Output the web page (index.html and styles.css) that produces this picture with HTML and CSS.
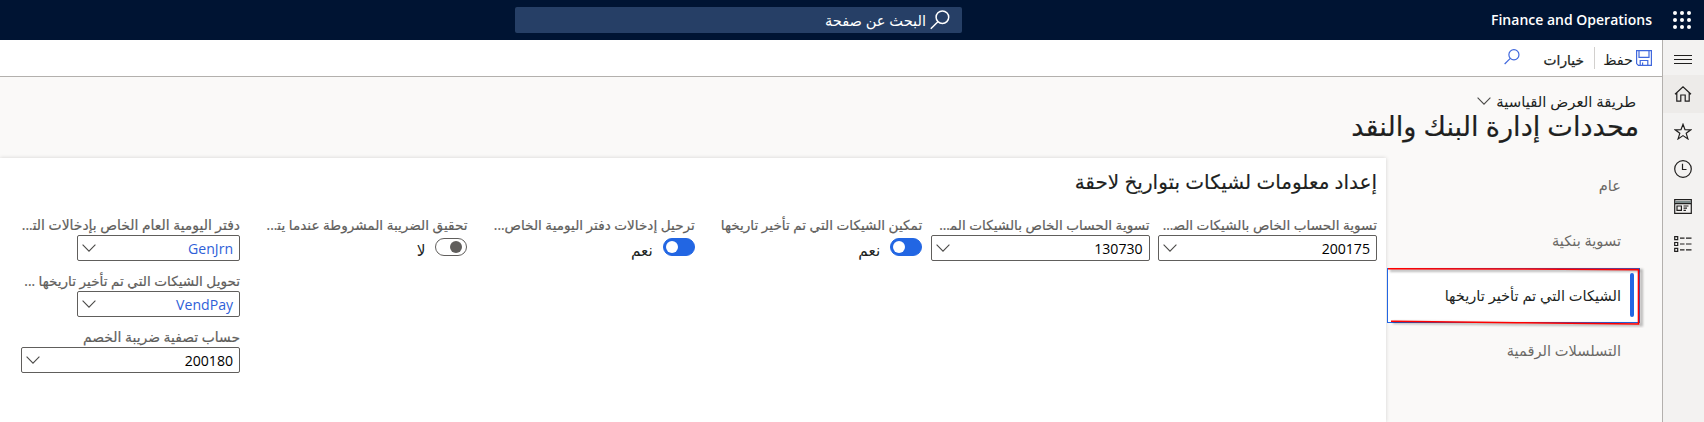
FILE: index.html
```html
<!DOCTYPE html>
<html lang="ar" dir="rtl">
<head>
<meta charset="utf-8">
<title>محددات إدارة البنك والنقد</title>
<link rel="stylesheet" href="styles.css">
</head>
<body>
<svg class="defs" aria-hidden="true">
  <symbol id="chevron" viewBox="0 0 14 8"><path d="M.6.7 7 7.1 13.4.7"/></symbol>
  <symbol id="search" viewBox="0 0 20 20"><circle cx="12.4" cy="7.2" r="6.3"/><path d="M7.9 11.7.8 18.8"/></symbol>
</svg>
<header class="topbar">
  <svg class="waffle" viewBox="0 0 18 18"><circle cx="2" cy="2" r="2"/><circle cx="9" cy="2" r="2"/><circle cx="16" cy="2" r="2"/><circle cx="2" cy="9" r="2"/><circle cx="9" cy="9" r="2"/><circle cx="16" cy="9" r="2"/><circle cx="2" cy="16" r="2"/><circle cx="9" cy="16" r="2"/><circle cx="16" cy="16" r="2"/></svg>
  <span class="brand" dir="ltr">Finance and Operations</span>
  <div class="searchbox"><svg class="search-icon"><use href="#search"/></svg><span>البحث عن صفحة</span></div>
</header>
<div class="shell">
  <nav class="rail">
    <a class="rail-item menu"><svg width="18" height="11" viewBox="0 0 18 11"><path d="M0 1.5h18M0 5.5h18M0 9.5h18"/></svg></a>
    <a class="rail-item home"><svg width="18" height="16" viewBox="0 0 18 16"><path d="M1 8.2 9 .8l8 7.4M2.8 6.8v8.400h4V9h4.400v6.200h4V6.800"/></svg></a>
    <a class="rail-item"><svg width="18" height="17" viewBox="0 0 18 17"><path d="m9 1.3 2 5.400 5.800.1-4.600 3.500 1.700 5.600L9 12.600l-4.900 3.300 1.700-5.600L1.200 6.800 7 6.700z"/></svg></a>
    <a class="rail-item"><svg width="18" height="18" viewBox="0 0 18 18"><circle cx="9" cy="9" r="8.3"/><path d="M8.5 3.800v5.700h4"/></svg></a>
    <a class="rail-item"><svg width="18" height="15" viewBox="0 0 18 15"><path d="M.7.7h16.600v13.600H.7zM.7 4.600h16.600M3 7h4.400v4.400H3zM9.500 7h5M9.500 9.200h3.500M9.500 11.400h2.400"/><path class="bar" d="M1 3h16"/></svg></a>
    <a class="rail-item"><svg width="18" height="16" viewBox="0 0 18 16"><path d="M.7.7h3v3h-3zM.7 6.500h3v3h-3zM.7 12.300h3v3h-3zM6 2.200h4.500M12 2.200h5.500M6 8h4.500M12 8h5.500M6 13.800h4.500M12 13.800h5.500"/></svg></a>
  </nav>
  <main class="page">
    <div class="toolbar">
      <svg class="save-icon" viewBox="0 0 16 16"><path d="M.6.6h14.800v14.800H2.400L.6 13.600zM3 .6v6.800h10V.6M4.200 15.400v-4.900h7.600v4.900M6.600 12.600v2.800"/></svg>
      <span class="save">حفظ</span>
      <i class="divider"></i>
      <span class="options">خيارات</span>
      <svg class="find" viewBox="0 0 20 20"><use href="#search"/></svg>
    </div>
    <div class="heading">
      <div class="view"><span>طريقة العرض القياسية</span><svg class="chev"><use href="#chevron"/></svg></div>
      <h1>محددات إدارة البنك والنقد</h1>
    </div>
    <div class="content">
      <ul class="tabs">
        <li>عام</li>
        <li>تسوية بنكية</li>
        <li class="active">الشيكات التي تم تأخير تاريخها<svg class="marker" viewBox="0 0 260 64"><path class="shade" d="M3 6.500H254.500V61L130 60 6 58.500"/><path class="red" d="M1 4.700 126 5 251.500 5.600V60L130 58.700 4 57.300"/></svg></li>
        <li>التسلسلات الرقمية</li>
      </ul>
      <section class="card">
        <h2>إعداد معلومات لشيكات بتواريخ لاحقة</h2>
        <div class="fields">
          <div class="col">
            <label>تسوية الحساب الخاص بالشيكات الص&zwj;...</label>
            <div class="combo"><span>200175</span><svg class="chev"><use href="#chevron"/></svg></div>
          </div>
          <div class="col">
            <label>تسوية الحساب الخاص بالشيكات الم&zwj;...</label>
            <div class="combo"><span>130730</span><svg class="chev"><use href="#chevron"/></svg></div>
          </div>
          <div class="col">
            <label>تمكين الشيكات التي تم تأخير تاريخها</label>
            <div class="toggle-row"><i class="toggle on"></i><span>نعم</span></div>
          </div>
          <div class="col">
            <label>ترحيل إدخالات دفتر اليومية الخاص...</label>
            <div class="toggle-row"><i class="toggle on"></i><span>نعم</span></div>
          </div>
          <div class="col">
            <label>تحقيق الضريبة المشروطة عندما يت&zwj;...</label>
            <div class="toggle-row"><i class="toggle"></i><span>لا</span></div>
          </div>
          <div class="col">
            <label class="wide">دفتر اليومية العام الخاص بإدخالات الت&zwj;...</label>
            <div class="combo short"><span class="link">GenJrn</span><svg class="chev"><use href="#chevron"/></svg></div>
            <label>تحويل الشيكات التي تم تأخير تاريخها ...</label>
            <div class="combo short"><span class="link">VendPay</span><svg class="chev"><use href="#chevron"/></svg></div>
            <label class="wide">حساب تصفية ضريبة الخصم</label>
            <div class="combo"><span>200180</span><svg class="chev"><use href="#chevron"/></svg></div>
          </div>
        </div>
      </section>
    </div>
  </main>
</div>
</body>
</html>
```

FILE: styles.css
```css
*{box-sizing:border-box}
body{margin:0;height:422px;overflow:hidden;font-family:"Open Sans","DejaVu Sans",sans-serif;font-size:14.6px;color:#201f1e;background:#faf9f8;white-space:nowrap}
svg{display:block;fill:none;stroke:currentColor;flex:none}
.defs{position:absolute;width:0;height:0}
.topbar{height:40px;background:#001433;color:#fff;display:flex;align-items:center;padding-right:12px}
.waffle{width:18px;height:18px;fill:#fff;stroke:none;margin-right:1px}
.brand{font-weight:600;font-size:14px;width:162px;margin-right:20px;line-height:20px;padding-bottom:1px}
.searchbox{width:447px;height:26px;margin-right:529px;background:#263f66;border-radius:2px;display:flex;align-items:center;padding-right:12px;gap:4px;line-height:24px}
.search-icon{width:20px;height:20px;stroke-width:1.5}
.shell{display:flex;height:382px}
.rail{width:42px;background:#f3f2f1;border-left:1px solid #b3b0ad;color:#201f1e}
.rail-item{height:37.5px;display:flex;align-items:center;justify-content:center;stroke-width:1.2;padding-right:1px}
.rail-item.menu{height:35px;padding-top:3px;stroke-width:1}
.rail-item.home{background:#edebe9}
.rail-item .bar{stroke:#7c8a8a;stroke-width:2}
.page{flex:1;min-width:0}
.toolbar{height:37px;background:#fff;border-bottom:1px solid #b3b0ad;display:flex;align-items:center;padding-right:10px}
.save-icon{width:16px;height:16px;color:#4068dd;stroke-width:1.2}
.save{font-size:14.4px;width:29px;margin-right:3px;margin-top:3px}
.divider{width:1px;height:22px;background:#d2d0ce;margin-right:9px}
.options{font-size:13.8px;width:41px;margin-right:10px;margin-top:3px;-webkit-text-stroke:.25px}
.find{width:16px;height:16px;margin-right:23px;color:#4068dd;stroke-width:1.5;margin-bottom:3px}
.heading{height:81px;padding:13px 23px 0}
.view{display:flex;align-items:center;gap:5px;font-size:14.9px;line-height:22px;padding-right:3px}
.chev{width:14px;height:8px;color:#4b4a48;stroke-width:1.1}
h1{margin:0;font-size:27.2px;line-height:28px;font-weight:400;-webkit-text-stroke:.2px}
.content{display:flex;height:264px}
.tabs{list-style:none;margin:0;padding:0 22px 0 0;width:276px}
.tabs li{position:relative;height:55px;line-height:54px;padding-right:19px;color:#6b6966;width:253px}
.tabs li.active{color:#201f1e;background:#fff;border:1px solid #2266e3;padding-right:18px;line-height:52px}
.tabs li.active::before{content:"";position:absolute;right:5px;top:4px;width:4px;height:44px;border-radius:2px;background:#2266e3}
.marker{position:absolute;left:-1px;top:-5px;width:260px;height:64px}
.red{stroke:#ff0000;stroke-width:1.6}
.shade{stroke:#000;stroke-opacity:.25;stroke-width:3;filter:blur(1.2px)}
.card{flex:1;background:#fff;box-shadow:0 0 4px rgba(0,0,0,.16);padding:7px 9px}
h2{margin:0;font-size:20px;font-weight:400;line-height:34px;-webkit-text-stroke:.15px}
.fields{display:grid;grid-template-columns:repeat(6,219px);column-gap:8.4px;padding-top:16px}
.col{display:flex;flex-direction:column;color:#201f1e}
label{font-size:13.6px;line-height:20px;height:20px;color:#605e5c;-webkit-text-stroke:.2px}
label.wide{font-size:13.9px}
.combo{height:26px;width:219px;border:1px solid #605e5c;border-radius:2px;display:flex;align-items:center;justify-content:space-between;padding:0 6px 0 4px;font-size:14.1px;color:#000;margin-bottom:10.2px}
.combo.short{width:163px}
.combo .link{color:#2f5fd8}
.toggle-row{display:flex;gap:10px;padding-top:3px;font-size:15.4px;line-height:26px}
.toggle{width:32px;height:18px;border:1px solid #605e5c;border-radius:9px;display:flex;align-items:center;padding:0 4px}
.toggle::before{content:"";width:12px;height:12px;border-radius:50%;background:#605e5c}
.toggle.on{background:#2266e3;border-color:#2266e3;justify-content:flex-end;padding:0 2px}
.toggle.on::before{background:#fff}
```
